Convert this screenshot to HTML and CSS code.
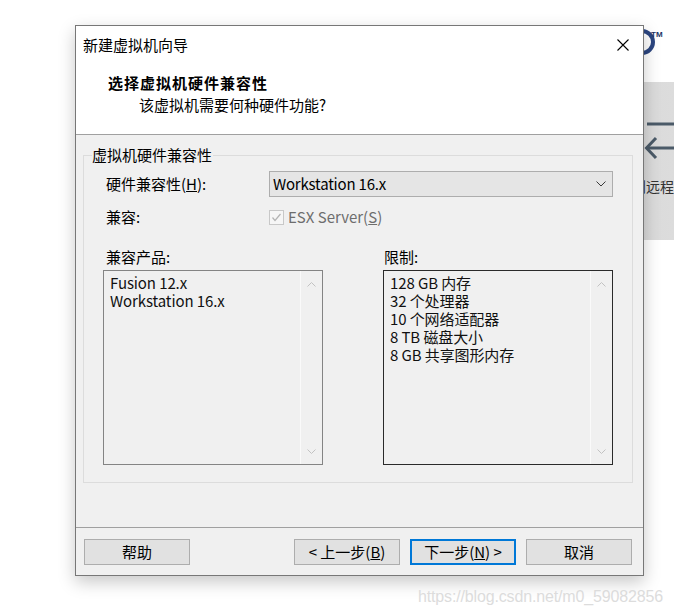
FILE: index.html
```html
<!DOCTYPE html>
<html lang="zh-CN">
<head>
<meta charset="utf-8">
<title>新建虚拟机向导</title>
<link rel="stylesheet" href="styles.css">
</head>
<body>
  <div class="bg-logo">
    <svg class="logo-arc" width="30" height="30" viewBox="0 0 30 30"><path d="M17 4 A11 11 0 0 1 17 26" fill="none" stroke="#2c4680" stroke-width="4"/></svg>
    <span class="tm">TM</span>
  </div>
  <div class="bg-panel">
    <svg class="bg-icon" width="30" height="38" viewBox="0 0 30 38">
      <line x1="3" y1="2" x2="30" y2="2" stroke="#4b5a68" stroke-width="3"/>
      <line x1="3" y1="26" x2="30" y2="26" stroke="#4b5a68" stroke-width="3"/>
      <polyline points="12,16 2.5,26 12,36" fill="none" stroke="#4b5a68" stroke-width="3"/>
    </svg>
    <div class="bg-text">到远程</div>
  </div>

  <div class="dialog">
    <div class="header">
      <div class="titlebar">
        <span class="title">新建虚拟机向导</span>
        <svg class="close" width="12" height="12" viewBox="0 0 12 12"><path d="M0.5 0.5 L11.5 11.5 M11.5 0.5 L0.5 11.5" stroke="#000" stroke-width="1.1"/></svg>
      </div>
      <div class="heading">选择虚拟机硬件兼容性</div>
      <div class="subheading">该虚拟机需要何种硬件功能?</div>
    </div>

    <div class="body">
      <div class="group">
        <div class="group-label">虚拟机硬件兼容性</div>
        <div class="row row-combo">
          <span class="field-label">硬件兼容性(<u>H</u>):</span>
          <div class="combo">
            <span class="combo-text">Workstation 16.x</span>
            <svg class="chev" width="10" height="6" viewBox="0 0 10 6"><polyline points="0.5,0.5 5,5 9.5,0.5" fill="none" stroke="#3a3a3a" stroke-width="1"/></svg>
          </div>
        </div>
        <div class="row row-check">
          <span class="field-label">兼容:</span>
          <span class="checkbox">
            <svg width="13" height="13" viewBox="0 0 13 13"><polyline points="2.5,6.5 5,9.5 10.5,3" fill="none" stroke="#b3b3b3" stroke-width="1.2"/></svg>
          </span>
          <span class="check-text">ESX Server(<u>S</u>)</span>
        </div>
        <div class="lists">
          <div class="list-col list-left">
            <div class="list-label">兼容产品:</div>
            <div class="listbox listbox-disabled">
              <div class="items">
                <div class="item">Fusion 12.x</div>
                <div class="item">Workstation 16.x</div>
              </div>
              <div class="scroll">
                <svg width="9" height="5" viewBox="0 0 9 5"><polyline points="0.5,4.5 4.5,0.5 8.5,4.5" fill="none" stroke="#c2c2c2" stroke-width="1"/></svg>
                <svg width="9" height="5" viewBox="0 0 9 5"><polyline points="0.5,0.5 4.5,4.5 8.5,0.5" fill="none" stroke="#c2c2c2" stroke-width="1"/></svg>
              </div>
            </div>
          </div>
          <div class="list-col list-right">
            <div class="list-label">限制:</div>
            <div class="listbox listbox-dark">
              <div class="items">
                <div class="item">128 GB 内存</div>
                <div class="item">32 个处理器</div>
                <div class="item">10 个网络适配器</div>
                <div class="item">8 TB 磁盘大小</div>
                <div class="item">8 GB 共享图形内存</div>
              </div>
              <div class="scroll">
                <svg width="9" height="5" viewBox="0 0 9 5"><polyline points="0.5,4.5 4.5,0.5 8.5,4.5" fill="none" stroke="#c2c2c2" stroke-width="1"/></svg>
                <svg width="9" height="5" viewBox="0 0 9 5"><polyline points="0.5,0.5 4.5,4.5 8.5,0.5" fill="none" stroke="#c2c2c2" stroke-width="1"/></svg>
              </div>
            </div>
          </div>
        </div>
      </div>

      <div class="separator"></div>

      <div class="buttons">
        <button class="btn">帮助</button>
        <span class="spacer"></span>
        <button class="btn">&lt; 上一步(<u>B</u>)</button>
        <button class="btn btn-default">下一步(<u>N</u>) &gt;</button>
        <button class="btn">取消</button>
      </div>
    </div>
  </div>

  <div class="watermark">https://blog.csdn.net/m0_59082856</div>
</body>
</html>
```

FILE: styles.css
```css
* { box-sizing: border-box; }
html, body { margin: 0; padding: 0; }
body {
  width: 674px;
  height: 616px;
  background: #fff;
  position: relative;
  overflow: hidden;
  font-family: "Noto Sans CJK SC", "Noto Sans", sans-serif;
  font-size: 15px;
  color: #000;
}

/* background application (behind dialog) */
.bg-logo {
  position: absolute;
  left: 625px;
  top: 27px;
  width: 49px;
  height: 30px;
  display: flex;
  align-items: flex-start;
}
.logo-arc { display: block; flex: none; }
.tm {
  font-family: "Liberation Sans", sans-serif;
  font-weight: bold;
  font-size: 8px;
  line-height: 10px;
  color: #1e3566;
  margin-left: -4px;
  margin-top: 3px;
}
.bg-panel {
  position: absolute;
  left: 560px;
  top: 82px;
  width: 114px;
  height: 158px;
  background: linear-gradient(90deg, #d6d6d6, #dcdcdc);
  padding-top: 40px;
  overflow: hidden;
}
.bg-icon { display: block; margin-left: 84px; }
.bg-text {
  margin-top: 16px;
  margin-left: 72px;
  white-space: nowrap;
  font-size: 14px;
  line-height: 20px;
  color: #333;
}

/* dialog */
.dialog {
  position: absolute;
  left: 75px;
  top: 25px;
  width: 569px;
  height: 551px;
  border: 1px solid #777;
  background: #f0f0f0;
  box-shadow: 0 6px 16px rgba(0, 0, 0, 0.22);
  display: flex;
  flex-direction: column;
}
.header {
  background: #fff;
  height: 109px;
  border-bottom: 1px solid #a0a0a0;
  flex: none;
}
.titlebar {
  height: 37px;
  display: flex;
  align-items: center;
  padding-left: 7px;
}
.title { line-height: 20px; }
.close { margin-left: auto; margin-right: 14px; display: block; }
.heading {
  margin: 10px 0 0 32px;
  line-height: 20px;
  font-weight: bold;
  letter-spacing: 1px;
}
.subheading {
  margin: 2px 0 0 63px;
  line-height: 20px;
}

.body {
  flex: 1;
  display: flex;
  flex-direction: column;
}
.group {
  margin: 20px 10px 0 7px;
  border: 1px solid #dcdcdc;
  padding: 0 0 17px 19px;
}
.group-label {
  width: fit-content;
  margin: -11px 0 0 -11px;
  padding: 0 1px 0 0;
  background: #f0f0f0;
  line-height: 20px;
}
.row { display: flex; align-items: center; }
.row-combo { margin-top: 6px; height: 26px; }
.row-check { margin-top: 10px; height: 20px; }
.field-label {
  width: 163px;
  margin-left: 3px;
  line-height: 20px;
  flex: none;
}
.combo {
  width: 344px;
  height: 26px;
  border: 1px solid #adadad;
  background: #e5e5e5;
  display: flex;
  align-items: center;
  padding: 0 6px 0 3px;
}
.combo-text { line-height: 20px; letter-spacing: -0.2px; }
.chev { margin-left: auto; display: block; }
.checkbox {
  width: 15px;
  height: 15px;
  border: 1px solid #c8c8c8;
  background: #f6f6f6;
  display: flex;
  align-items: center;
  justify-content: center;
  margin-right: 4px;
  margin-top: 1px;
}
.checkbox svg { display: block; }
.check-text { color: #6d6d6d; line-height: 20px; }

.lists { display: flex; margin-top: 20px; }
.list-col { display: flex; flex-direction: column; }
.list-left { width: 220px; }
.list-right { width: 230px; margin-left: 60px; }
.list-label { line-height: 20px; }
.list-left .list-label { margin-left: 3px; }
.list-right .list-label { margin-left: 1px; }
.listbox {
  margin-top: 3px;
  height: 195px;
  border: 1px solid #848484;
  background: #f0f0f0;
  display: flex;
}
.listbox-dark { border-color: #2a2a2a; }
.items {
  flex: 1;
  padding: 3px 0 0 6px;
  color: #111;
}
.item {
  height: 18px;
  line-height: 18px;
  letter-spacing: -0.1px;
}
.scroll {
  width: 22px;
  border-left: 1px solid #fafafa;
  display: flex;
  flex-direction: column;
  align-items: center;
  justify-content: space-between;
  padding: 11px 0 10px;
}
.scroll svg { display: block; }

.separator {
  margin-top: 44px;
  height: 1px;
  background: #a0a0a0;
  flex: none;
}
.buttons {
  margin-top: 11px;
  height: 26px;
  padding: 0 11px 0 8px;
  display: flex;
  gap: 10px;
}
.spacer { flex: 1; }
.btn {
  width: 106px;
  height: 26px;
  border: 1px solid #adadad;
  background: #e1e1e1;
  font-family: inherit;
  font-size: 15px;
  line-height: 22px;
  color: #000;
  padding: 0;
  margin: 0;
}
.btn-default { border: 2px solid #0078d7; }

.watermark {
  position: absolute;
  left: 418px;
  top: 587px;
  font-family: "Liberation Sans", sans-serif;
  font-size: 16px;
  line-height: 20px;
  color: #dcdcdc;
  letter-spacing: -0.15px;
  white-space: nowrap;
}
```
